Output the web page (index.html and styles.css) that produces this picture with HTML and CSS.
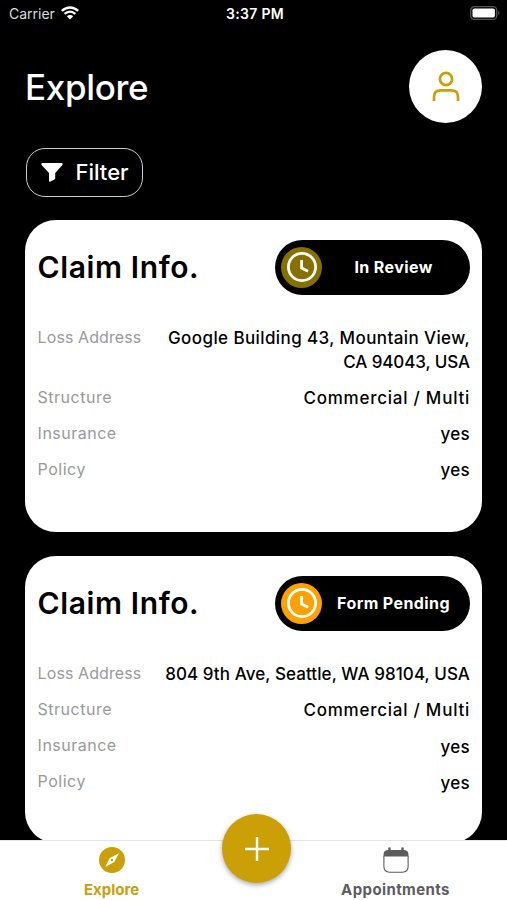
FILE: index.html
```
<!DOCTYPE html>
<html lang="en">
<head>
<meta charset="utf-8">
<title>Explore</title>
<link rel="stylesheet" href="styles.css">
</head>
<body>
<div class="status-bar">
  <div class="carrier">
    <span>Carrier</span>
    <svg class="wifi" viewBox="0 0 18 14">
      <path d="M.8 4.9Q9 -2 17.2 4.9M3.6 7.9Q9 3.4 14.4 7.9" fill="none" stroke="#fff" stroke-width="2.3"/>
      <path d="M5.8 10.2Q9 7.6 12.2 10.2L9 13.6Z" fill="#fff"/>
    </svg>
  </div>
  <div class="time">3:37 PM</div>
  <svg class="battery" viewBox="0 0 31 14">
    <rect x=".7" y=".7" width="26" height="12.6" rx="3.6" fill="none" stroke="#555" stroke-width="1.3"/>
    <rect x="2.5" y="2.5" width="22.4" height="9" rx="1.8" fill="#fff"/>
    <path d="M28.3 4.8Q30.5 7 28.3 9.2Z" fill="#666"/>
  </svg>
</div>

<header class="header">
  <h1>Explore</h1>
  <div class="avatar">
    <svg viewBox="0 0 28 30" fill="none" stroke="#c9a009" stroke-width="2.7">
      <circle cx="14" cy="8" r="6.1"/>
      <path d="M2 30V26Q2 19.4 8.6 19.4H19.4Q26 19.4 26 26V30"/>
    </svg>
  </div>
</header>

<div class="filter">
  <svg viewBox="0 0 22 19"><path d="M1.3 0H20.7Q22.4 .5 21.2 2.2L14.2 10V15.2Q14.2 16 13.4 16.4L9 18.8Q8 19 8 18V10L.8 2.2Q-.4 .5 1.3 0Z" fill="#fff"/></svg>
  <span>Filter</span>
</div>

<main>
  <section class="card">
    <div class="card-top">
      <h2>Claim Info.</h2>
      <div class="pill">
        <div class="clock review">
          <svg viewBox="0 0 32 32" fill="none" stroke="#fff" stroke-width="2.8"><circle cx="16" cy="16" r="13.6"/><path d="M15.6 9V17L22.2 20.2"/></svg>
        </div>
        <div class="pill-text">In Review</div>
      </div>
    </div>
    <dl>
      <div class="row">
        <dt>Loss Address</dt>
        <dd><span class="address-long">Google Building 43, Mountain View,</span><br><span class="address-end">CA 94043, USA</span></dd>
      </div>
      <div class="row"><dt class="wide">Structure</dt><dd><span class="structure">Commercial / Multi</span></dd></div>
      <div class="row"><dt class="wide">Insurance</dt><dd><span class="answer">yes</span></dd></div>
      <div class="row"><dt class="wide">Policy</dt><dd><span class="answer">yes</span></dd></div>
    </dl>
  </section>

  <section class="card last">
    <div class="card-top">
      <h2>Claim Info.</h2>
      <div class="pill">
        <div class="clock pending">
          <svg viewBox="0 0 32 32" fill="none" stroke="#fff" stroke-width="2.8"><circle cx="16" cy="16" r="13.6"/><path d="M15.6 9V17L22.2 20.2"/></svg>
        </div>
        <div class="pill-text">Form Pending</div>
      </div>
    </div>
    <dl>
      <div class="row">
        <dt>Loss Address</dt>
        <dd><span class="address">804 9th Ave, Seattle, WA 98104, USA</span></dd>
      </div>
      <div class="row"><dt class="wide">Structure</dt><dd><span class="structure">Commercial / Multi</span></dd></div>
      <div class="row"><dt class="wide">Insurance</dt><dd><span class="answer">yes</span></dd></div>
      <div class="row"><dt class="wide">Policy</dt><dd><span class="answer">yes</span></dd></div>
    </dl>
  </section>
</main>

<nav class="tabs">
  <div class="tab active">
    <svg viewBox="0 0 26 26"><circle cx="13" cy="13" r="13" fill="#c9a009"/><path d="M20 6.2L15.2 15L6.2 20L10.8 11Z" fill="#fff"/><circle cx="13" cy="13" r="1.2" fill="#c9a009"/></svg>
    <span>Explore</span>
  </div>
  <div class="tab">
    <svg viewBox="0 0 26 26"><path d="M.5 9.5V8Q.5 3 5.3 3V.8Q6.5 -.4 7.7 .8V3H18.3V.8Q19.5 -.4 20.7 .8V3Q25.5 3 25.5 8V9.5Z" fill="#5c5c60"/><path d="M.9 9V19.5Q.9 25.2 6.6 25.2H19.4Q25.1 25.2 25.1 19.5V9" fill="none" stroke="#5c5c60" stroke-width="1.1"/></svg>
    <span class="appointments">Appointments</span>
  </div>
  <div class="add">
    <svg viewBox="0 0 24 24"><path d="M12 0V24M0 12H24" stroke="#fff" stroke-width="2.4"/></svg>
  </div>
</nav>
</body>
</html>
```
FILE: styles.css
```
* {
  box-sizing: border-box;
}
body {
  margin: 0;
  height: 900px;
  overflow: hidden;
  display: flex;
  flex-direction: column;
  background: #000;
  color: #fff;
  font-family: Inter, "Liberation Sans", sans-serif;
}
h1, h2, dl, dt, dd {
  margin: 0;
}
svg {
  display: block;
}
span {
  white-space: nowrap;
}

.status-bar {
  flex: none;
  height: 26px;
  padding: 0 6px 0 9px;
  display: grid;
  grid-template-columns: 1fr auto 1fr;
  align-items: center;
  font-size: 14px;
}
.carrier {
  display: flex;
  align-items: center;
  gap: 6px;
  color: #ddd;
}
.wifi {
  width: 18px;
  height: 14px;
}
.time {
  font-weight: 600;
  letter-spacing: .3px;
}
.battery {
  width: 31px;
  height: 14px;
  justify-self: end;
}

.header {
  flex: none;
  margin-top: 24px;
  padding: 0 25px;
  display: flex;
  justify-content: space-between;
  align-items: center;
}
.header h1 {
  font-size: 35px;
  font-weight: 500;
  letter-spacing: -.35px;
}
.avatar {
  width: 73px;
  height: 73px;
  border-radius: 50%;
  background: #fff;
  display: flex;
  align-items: center;
  justify-content: center;
}
.avatar svg {
  width: 28px;
  height: 30px;
  margin-bottom: 1px;
}

.filter {
  flex: none;
  width: 117px;
  height: 49px;
  margin: 24.5px 0 23px 25.5px;
  padding-left: 14px;
  border: 1px solid #ccc;
  border-radius: 19px;
  display: flex;
  align-items: center;
  gap: 13px;
  font-size: 22px;
  font-weight: 500;
}
.filter svg {
  width: 22px;
  height: 19px;
}

main {
  flex: 1;
  min-height: 0;
  overflow: hidden;
  padding: 0 24.7px 0 25.3px;
}
.card {
  height: 312px;
  margin-bottom: 24.3px;
  padding: 20px 12.3px 0;
  border-radius: 31px;
  background: #fff;
  color: #000;
}
.last {
  height: 287px;
}
.card-top {
  display: flex;
  justify-content: space-between;
  align-items: center;
}
.card h2 {
  font-size: 30px;
  font-weight: 600;
  letter-spacing: .6px;
}
.pill {
  width: 195px;
  height: 55px;
  padding-left: 6px;
  border-radius: 28px;
  background: #000;
  color: #fff;
  display: flex;
  align-items: center;
}
.clock {
  width: 41px;
  height: 41px;
  border-radius: 50%;
  display: flex;
  align-items: center;
  justify-content: center;
}
.clock svg {
  width: 32px;
  height: 32px;
}
.review {
  background: #857000;
}
.pending {
  background: #ffa200;
}
.pill-text {
  flex: 1;
  padding-right: 5px;
  text-align: center;
  font-size: 16px;
  font-weight: 700;
  letter-spacing: .4px;
}

dl {
  margin-top: 30px;
  display: flex;
  flex-direction: column;
  gap: 12.2px;
}
.row {
  display: flex;
  justify-content: space-between;
  line-height: 24px;
}
dt {
  color: #999;
  font-size: 16px;
  letter-spacing: .08px;
}
.wide {
  letter-spacing: .5px;
}
dd {
  padding-top: 1.4px;
  margin-bottom: -1.4px;
  font-size: 17px;
  font-weight: 500;
  text-align: right;
}
.address-long {
  letter-spacing: .4px;
}
.address-end {
  letter-spacing: -.1px;
}
.address {
  letter-spacing: .08px;
}
.structure {
  letter-spacing: .76px;
}
.answer {
  letter-spacing: .3px;
}

.tabs {
  flex: none;
  position: relative;
  height: 60px;
  border-top: 1px solid #e4e4e4;
  background: #fff;
  display: flex;
  justify-content: space-between;
}
.tab {
  width: 223px;
  padding-top: 6px;
  display: flex;
  flex-direction: column;
  align-items: center;
  gap: 7px;
  color: #5c5c60;
  font-size: 15px;
  font-weight: 700;
  line-height: 20px;
}
.tab svg {
  width: 26px;
  height: 26px;
}
.active {
  color: #c9a009;
}
.appointments {
  letter-spacing: .4px;
}
.add {
  position: absolute;
  top: -27px;
  left: 222px;
  width: 69px;
  height: 69px;
  border-radius: 50%;
  background: #cba007;
  box-shadow: 0 2px 5px rgba(0, 0, 0, .35);
  display: flex;
  align-items: center;
  justify-content: center;
}
.add svg {
  width: 24px;
  height: 24px;
}
```
